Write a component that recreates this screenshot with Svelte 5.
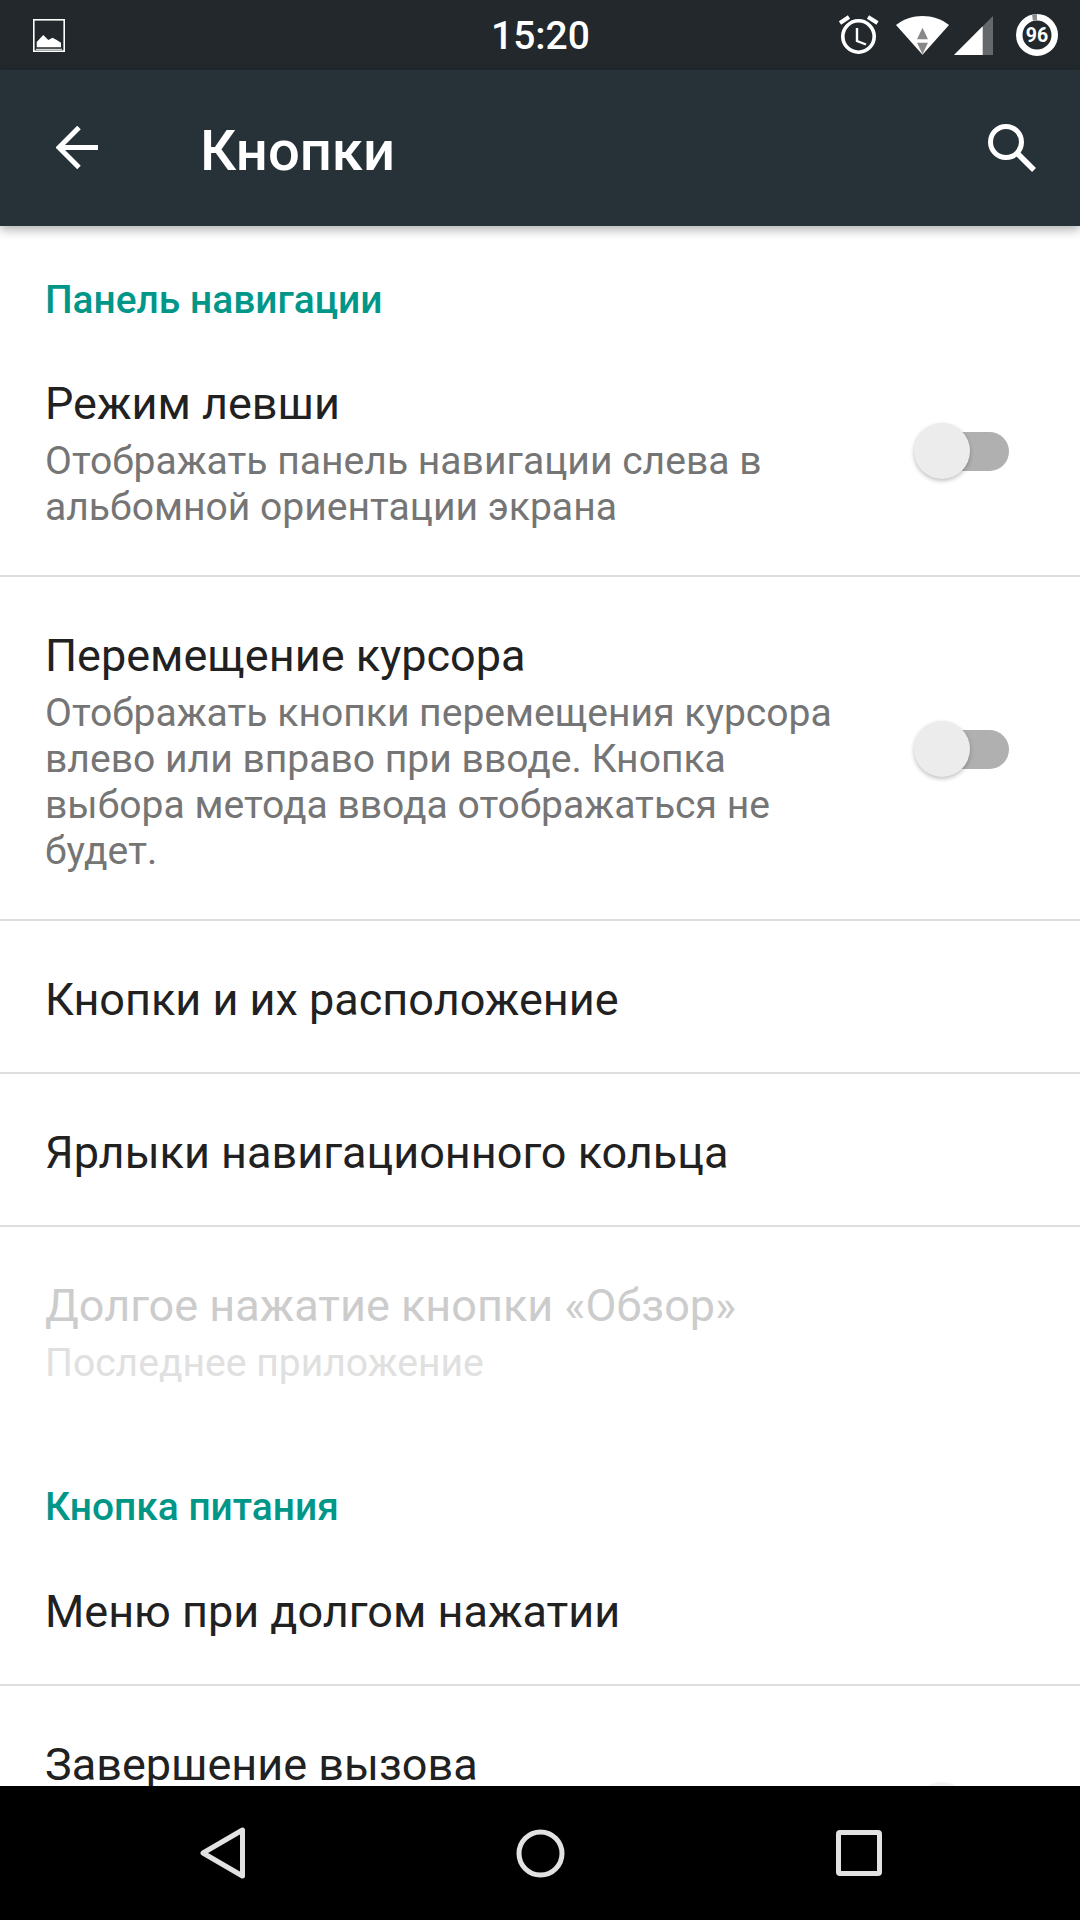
<script>
  const block1 = [
    { title: 'Режим левши', sub: 'Отображать панель навигации слева в альбомной ориентации экрана', toggle: true },
    { title: 'Перемещение курсора', sub: 'Отображать кнопки перемещения курсора влево или вправо при вводе. Кнопка выбора метода ввода отображаться не будет.', toggle: true },
    { title: 'Кнопки и их расположение' },
    { title: 'Ярлыки навигационного кольца' }
  ];
</script>

<div class="screen">
  <div class="status">
    <svg class="pic" viewBox="0 0 32 33" width="32" height="33">
      <rect x="0.8" y="0.8" width="30.4" height="31.4" fill="none" stroke="#fff" stroke-width="1.6"/>
      <path d="M3.7 28.3V23L10.3 16L15.3 21L19.6 18.7L23.7 21L28 23.7V28.3Z" fill="#fff"/>
      <path d="M3 30.3H29" stroke="#fff" stroke-width="1"/>
    </svg>
    <span class="time">15:20</span>
    <div class="sicons">
      <svg viewBox="0 0 41 41" width="41" height="41">
        <circle cx="20.5" cy="21.5" r="15.7" fill="none" stroke="#fff" stroke-width="3.6"/>
        <path d="M19 13V26L28 29.5" fill="none" stroke="#fff" stroke-width="2.4"/>
        <path d="M2 8L11 2M39.5 8L30 2" stroke="#fff" stroke-width="4"/>
      </svg>
      <svg class="wifi" viewBox="0 0 53 39" width="53" height="39">
        <path d="M0 9C15 -3 38 -3 53 9L26.5 38.7Z" fill="#fff"/>
        <path d="M26.5 11.7L32 23.3H21Z" fill="#888"/>
        <path d="M26.5 38.3L21 26.7H32Z" fill="#888"/>
      </svg>
      <svg class="signal" viewBox="0 0 39 39" width="39" height="39">
        <path d="M0 39L39 0V39Z" fill="#66696b"/>
        <path d="M0 39L28.7 10.3V39Z" fill="#fff"/>
      </svg>
      <svg class="batt" viewBox="0 0 42 42" width="42" height="42">
        <circle cx="21" cy="21" r="17.75" fill="none" stroke="#fff" stroke-width="6.5"/>
        <path d="M16 0.3H21V6.5H16.8Z" fill="#8a8c8e"/>
        <text x="21" y="28" text-anchor="middle" class="battnum">96</text>
      </svg>
    </div>
  </div>

  <header class="bar">
    <svg class="back" viewBox="0 0 43 44" width="43" height="44">
      <path d="M42 21.5H3.5M23 1.5L3 21.5L23 41.5" fill="none" stroke="#fff" stroke-width="5"/>
    </svg>
    <h1>Кнопки</h1>
    <svg class="search" viewBox="0 0 48 48" width="48" height="48">
      <circle cx="18" cy="18" r="15.5" fill="none" stroke="#fff" stroke-width="5"/>
      <path d="M28.5 28.5L46 46" stroke="#fff" stroke-width="5.5"/>
    </svg>
  </header>

  <main class="list">
    <h2 class="first">Панель навигации</h2>
    {#each block1 as item}
      <div class="row">
        <div class="text">
          <div class="title">{item.title}</div>
          {#if item.sub}<div class="sub">{item.sub}</div>{/if}
        </div>
        {#if item.toggle}
          <div class="toggle"><span class="track"></span><span class="thumb"></span></div>
        {/if}
      </div>
    {/each}
    <div class="row plain disabled">
      <div class="text">
        <div class="title">Долгое нажатие кнопки «Обзор»</div>
        <div class="sub">Последнее приложение</div>
      </div>
    </div>
    <h2 class="second">Кнопка питания</h2>
    <div class="row"><div class="text"><div class="title">Меню при долгом нажатии</div></div></div>
    <div class="row plain"><div class="text"><div class="title">Завершение вызова</div></div></div>
    <span class="peek"></span>
  </main>

  <nav class="nav">
    <svg viewBox="0 0 46 52" width="46" height="52"><path d="M42.5 3V49L3 26Z" fill="none" stroke="#e2e2e2" stroke-width="5" stroke-linejoin="round"/></svg>
    <svg viewBox="0 0 49 49" width="49" height="49"><circle cx="24.5" cy="24.5" r="21.5" fill="none" stroke="#e2e2e2" stroke-width="5"/></svg>
    <svg viewBox="0 0 46 46" width="46" height="46"><rect x="2.5" y="2.5" width="41" height="41" rx="1.5" fill="none" stroke="#e2e2e2" stroke-width="5"/></svg>
  </nav>
</div>

<style>
  :global(body) { margin: 0; background: #fff; }
  .screen { width: 1080px; height: 1920px; display: flex; flex-direction: column; overflow: hidden; font-family: Roboto, sans-serif; background: #fff; }
  .status { height: 70px; flex: none; background: #22282c; display: flex; align-items: center; position: relative; padding: 0 22px 0 33px; box-sizing: border-box; justify-content: space-between; }
  .time { position: absolute; left: 491px; top: 13px; color: #fff; font-size: 39px; font-weight: 500; line-height: 46px; }
  .sicons { display: flex; align-items: center; }
  .wifi { margin-left: 17px; }
  .signal { margin-left: 5px; }
  .batt { margin-left: 23px; }
  .battnum { font: 700 19.5px Roboto, sans-serif; fill: #fff; }
  .bar { height: 156px; flex: none; background: #263238; display: flex; align-items: center; padding: 0 44px 0 56px; box-sizing: border-box; box-shadow: 0 4px 10px rgba(0,0,0,.3); position: relative; z-index: 1; }
  h1 { margin: 5px 0 0 101px; flex: 1; color: #fff; font-size: 56.2px; font-weight: 500; }
  .list { flex: 1; min-height: 0; overflow: hidden; position: relative; }
  h2 { margin: 0; padding: 0 45px 4px; color: #009688; font-size: 38.9px; font-weight: 500; line-height: 42px; }
  .first { padding-top: 53px; }
  .second { padding-top: 55px; padding-bottom: 5px; }
  .row { display: flex; justify-content: space-between; align-items: center; padding: 49px 71px 42px 45px; border-bottom: 2px solid #dedede; box-sizing: border-box; }
  .row.plain { border-bottom: 0; }
  .text { max-width: 800px; }
  .title { font-size: 45px; line-height: 60px; color: #212121; }
  .sub { font-size: 39.1px; line-height: 46px; color: #757575; margin: 4px 0 3px; }
  .disabled .title { color: #cccccc; }
  .disabled .sub { color: #e0e0e0; }
  .toggle { position: relative; width: 95px; height: 58px; flex: none; margin-bottom: 6px; }
  .track { position: absolute; left: 20px; right: 0; top: 10px; height: 39px; border-radius: 20px; background: #b0b0b0; }
  .thumb { position: absolute; left: 0; top: 1px; width: 56px; height: 56px; border-radius: 50%; background: #ececec; box-shadow: 0 2px 4px rgba(0,0,0,.25); }
  .peek { position: absolute; left: 914px; bottom: -52px; width: 56px; height: 56px; border-radius: 50%; background: #f3f3f3; }
  .nav { height: 134px; flex: none; background: #000; display: flex; align-items: center; position: relative; z-index: 1; padding-left: 200px; }
  .nav svg:nth-child(2) { margin-left: 270px; }
  .nav svg:nth-child(3) { margin-left: 271px; }
</style>
